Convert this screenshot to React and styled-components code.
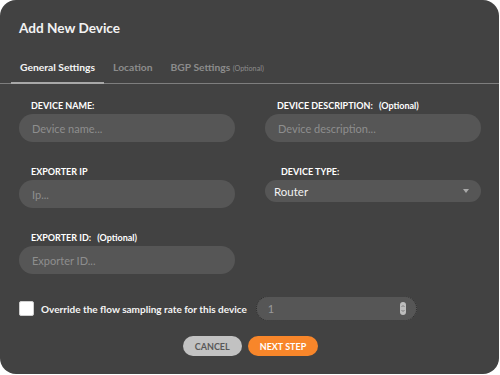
import React, { useState } from "react";
import styled, { createGlobalStyle, css } from "styled-components";

const GlobalStyle = createGlobalStyle`
  body {
    margin: 0;
    background: #ffffff;
    font-family: "Lato", "Open Sans", sans-serif;
  }
`;

const Modal = styled.div`
  width: 499px;
  height: 374px;
  background: #424242;
  border-radius: 16px;
  overflow: hidden;
  display: flex;
  flex-direction: column;
`;

const Header = styled.div`
  height: 55px;
  padding-left: 19px;
  display: flex;
  align-items: center;
`;

const Title = styled.h2`
  margin: 0;
  font-size: 13.6px;
  font-weight: 700;
  color: #f2f2f2;
`;

const TabList = styled.div`
  height: 28px;
  padding-left: 11px;
  display: flex;
  border-bottom: 1px solid #7e7e7e;
`;

const Tab = styled.div`
  padding: 6px 9px 0;
  font-size: 10.3px;
  font-weight: 700;
  color: #8c8c8c;
  cursor: pointer;
  ${(props) =>
    props.active &&
    css`
      color: #f4f4f4;
      border-bottom: 2px solid #a8a8a8;
      margin-bottom: -1px;
    `}
`;

const TabNote = styled.span`
  font-size: 7.2px;
  font-weight: 400;
`;

const Form = styled.div`
  padding: 16px 19px 0;
  display: grid;
  grid-template-columns: 216px 216px;
  column-gap: 30px;
  row-gap: 24px;
`;

const Field = styled.div`
  display: flex;
  flex-direction: column;
`;

const Label = styled.label`
  padding-left: ${(props) => props.indent || 12}px;
  margin-bottom: 2px;
  line-height: 12px;
  font-size: 9px;
  font-weight: 700;
  color: #ffffff;
  text-transform: uppercase;
`;

const Optional = styled.span`
  margin-left: 4px;
  text-transform: none;
`;

const Input = styled.input`
  box-sizing: border-box;
  height: 28px;
  padding: 0 13px;
  border: none;
  border-radius: 14px;
  background: #565656;
  color: #eeeeee;
  font-family: "Lato", sans-serif;
  font-size: 11px;
  outline: none;
  &::placeholder {
    color: #8e8e8e;
  }
`;

const SelectBox = styled.div`
  box-sizing: border-box;
  height: 22px;
  padding: 0 12px 0 9px;
  border-radius: 11px;
  background: #565656;
  display: flex;
  align-items: center;
  justify-content: space-between;
  color: #f2f2f2;
  font-size: 11.5px;
`;

const Caret = styled.span`
  width: 0;
  height: 0;
  border-left: 3px solid transparent;
  border-right: 3px solid transparent;
  border-top: 4px solid #a9a9a9;
`;

const OverrideRow = styled.div`
  margin-top: 22px;
  padding-left: 19px;
  display: flex;
  align-items: center;
`;

const Checkbox = styled.span`
  width: 15px;
  height: 15px;
  box-sizing: border-box;
  border-radius: 2px;
  background: #ffffff;
  border: 1px solid #cfcfcf;
  flex-shrink: 0;
`;

const CheckLabel = styled.span`
  margin-left: 7px;
  font-size: 10px;
  font-weight: 700;
  color: #f4f4f4;
`;

const NumberBox = styled.div`
  box-sizing: border-box;
  width: 161px;
  height: 25px;
  margin-left: 9px;
  padding: 0 10px 0 11px;
  border: 1px dotted #2f2f2f;
  border-radius: 13px;
  background: #565656;
  display: flex;
  align-items: center;
  justify-content: space-between;
  color: #9a9a9a;
  font-size: 11px;
`;

const Spinner = styled.span`
  width: 6px;
  height: 13px;
  border-radius: 3px;
  background: #bdbdbd;
  display: flex;
  align-items: center;
  justify-content: center;
`;

const Actions = styled.div`
  margin-top: 15px;
  display: flex;
  justify-content: center;
  gap: 6px;
  padding-left: 2px;
`;

const Button = styled.button`
  height: 20px;
  padding: 0 12px;
  border: none;
  border-radius: 10px;
  font-family: "Lato", sans-serif;
  font-size: 9px;
  font-weight: 700;
  text-transform: uppercase;
  cursor: pointer;
  background: ${(props) => (props.primary ? "#f8862a" : "#c2c2c2")};
  color: ${(props) => (props.primary ? "#ffffff" : "#585858")};
  min-width: ${(props) => (props.primary ? 67 : 58)}px;
`;

export default function App() {
  const [tab, setTab] = useState(0);

  return (
    <>
      <GlobalStyle />
      <Modal>
        <Header>
          <Title>Add New Device</Title>
        </Header>
        <TabList>
          <Tab active={tab === 0} onClick={() => setTab(0)}>General Settings</Tab>
          <Tab active={tab === 1} onClick={() => setTab(1)}>Location</Tab>
          <Tab active={tab === 2} onClick={() => setTab(2)}>
            BGP Settings <TabNote>(Optional)</TabNote>
          </Tab>
        </TabList>
        <Form>
          <Field>
            <Label>Device name:</Label>
            <Input placeholder="Device name..." />
          </Field>
          <Field>
            <Label>
              Device description: <Optional>(Optional)</Optional>
            </Label>
            <Input placeholder="Device description..." />
          </Field>
          <Field>
            <Label>Exporter IP</Label>
            <Input placeholder="Ip..." />
          </Field>
          <Field>
            <Label indent={16}>Device type:</Label>
            <SelectBox>
              Router
              <Caret />
            </SelectBox>
          </Field>
          <Field>
            <Label>
              Exporter ID: <Optional>(Optional)</Optional>
            </Label>
            <Input placeholder="Exporter ID..." />
          </Field>
        </Form>
        <OverrideRow>
          <Checkbox />
          <CheckLabel>Override the flow sampling rate for this device</CheckLabel>
          <NumberBox>
            1
            <Spinner>
              <svg width="4" height="9" viewBox="0 0 4 9">
                <path d="M0.5 3 L2 1.5 L3.5 3 M0.5 6 L2 7.5 L3.5 6" fill="none" stroke="#6a6a6a" strokeWidth="0.8" />
              </svg>
            </Spinner>
          </NumberBox>
        </OverrideRow>
        <Actions>
          <Button>Cancel</Button>
          <Button primary>Next step</Button>
        </Actions>
      </Modal>
    </>
  );
}
